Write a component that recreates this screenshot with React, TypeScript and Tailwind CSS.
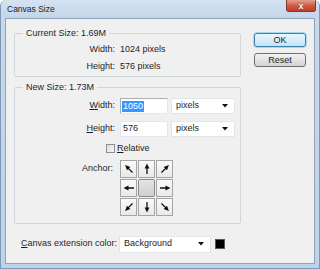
import React from 'react';

const Arrow: React.FC<{ deg: number }> = ({ deg }) => (
  <svg width="12" height="12" viewBox="0 0 12 12">
    <g transform={`rotate(${deg} 6 6)`}>
      <line x1="6" y1="11" x2="6" y2="4" stroke="#111" strokeWidth="1.3" />
      <polygon points="6,0.5 3.6,5.5 8.4,5.5" fill="#111" />
    </g>
  </svg>
);

const Caret: React.FC = () => (
  <svg width="6" height="4" viewBox="0 0 6 4">
    <polygon points="0,0 6,0 3,3.5" fill="#111" />
  </svg>
);

const Select: React.FC<{ value: string; className: string }> = ({ value, className }) => (
  <div className={`flex items-center justify-between bg-white border border-[#e2e6ea] pl-[4px] pr-[6px] ${className}`}>
    <span>{value}</span>
    <Caret />
  </div>
);

const anchorCells = [315, 0, 45, 270, -1, 90, 225, 180, 135];

const App: React.FC = () => {
  return (
    <div className="w-[320px] h-[269px] bg-gradient-to-b from-[#c9d9ec] to-[#bfd2e8] border-l border-r border-b border-[#7f98b5] rounded-t-[6px] flex flex-col font-['Liberation_Sans',Arial,sans-serif] text-[9px] text-[#1e1e1e] overflow-hidden">
      {/* Title bar */}
      <div className="h-[18px] flex items-start justify-between pl-[6px] pr-[3px] bg-gradient-to-b from-[#d5e2f1] to-[#c4d6ea]">
        <span className="pt-[4px] leading-[11px] text-[8.5px] text-[#222]">Canvas Size</span>
        <div className="w-[30px] h-[12px] rounded-b-[3px] border border-t-0 border-[#7a3a30] bg-gradient-to-b from-[#e2a08f] via-[#cf5a44] to-[#c0402a] flex items-center justify-center">
          <span className="text-white font-bold text-[9px] leading-[10px] [text-shadow:0_0_1px_#5a1d12]">x</span>
        </div>
      </div>

      {/* Client area */}
      <div className="mx-[4px] h-[246px] border border-[#8ea2bb] bg-[#f0f0f0] flex flex-col pt-[8px]">
        <div className="flex items-start">
          <div className="ml-[8px] w-[227px] flex flex-col">
            <fieldset className="border border-[#d0d6dc] rounded-[2px] pb-[4px]">
              <legend className="ml-[8px] px-[3px] leading-[12px]">Current Size: 1.69M</legend>
              <div className="grid grid-cols-[100px_1fr] gap-x-[5px] gap-y-[5px] mt-[4px] leading-[12px]">
                <span className="text-right">Width:</span>
                <span>1024 pixels</span>
                <span className="text-right">Height:</span>
                <span>576 pixels</span>
              </div>
            </fieldset>

            <fieldset className="mt-[4px] border border-[#d0d6dc] rounded-[2px] pb-[7px]">
              <legend className="ml-[8px] px-[3px] leading-[12px]">New Size: 1.73M</legend>
              <div className="mt-[5px] flex items-center">
                <span className="w-[100px] text-right">
                  <span className="underline">W</span>idth:
                </span>
                <div className="ml-[5px] w-[48px] h-[16px] bg-white border border-[#abadb3] border-b-[#e3e9ef] border-r-[#e3e9ef] flex items-center pl-[1px]">
                  <span className="bg-[#3399ff] text-white px-[1px] leading-[11px]">1050</span>
                </div>
                <Select value="pixels" className="ml-[3px] w-[64px] h-[16px]" />
              </div>
              <div className="mt-[7px] flex items-center">
                <span className="w-[100px] text-right">
                  <span className="underline">H</span>eight:
                </span>
                <div className="ml-[5px] w-[48px] h-[16px] bg-white border border-[#e3e9ef] flex items-center pl-[2px]">
                  576
                </div>
                <Select value="pixels" className="ml-[3px] w-[64px] h-[16px]" />
              </div>
              <div className="mt-[5px] flex items-center pl-[91px]">
                <div className="w-[9px] h-[9px] border border-[#8f8f8f] bg-gradient-to-br from-[#dcdcdc] to-[#f8f8f8]" />
                <span className="ml-[2px]">
                  <span className="underline">R</span>elative
                </span>
              </div>
              <div className="mt-[4px] flex items-start">
                <span className="w-[98px] text-right mt-[2px]">Anchor:</span>
                <div className="ml-[7px] grid grid-cols-[17px_17px_17px] gap-px">
                  {anchorCells.map((deg, i) =>
                    deg < 0 ? (
                      <div key={i} className="h-[18px] rounded-[2px] border border-[#8a8a8a] bg-gradient-to-b from-[#e4e4e4] to-[#cfcfcf]" />
                    ) : (
                      <div key={i} className="h-[18px] border border-[#a5a5a5] bg-gradient-to-b from-[#fafafa] to-[#e9e9e9] flex items-center justify-center">
                        <Arrow deg={deg} />
                      </div>
                    )
                  )}
                </div>
              </div>
            </fieldset>
          </div>

          <div className="ml-[13px] mt-[6px] flex flex-col gap-[6px]">
            <button className="w-[52px] h-[14px] rounded-[3px] border border-[#3c7fb1] bg-gradient-to-b from-[#eaf6fd] to-[#c4e5f6] shadow-[0_0_0_1px_#a7d6f1] leading-[12px] text-[#1e1e1e]">
              OK
            </button>
            <button className="w-[52px] h-[14px] rounded-[3px] border border-[#707070] bg-gradient-to-b from-[#f2f2f2] to-[#d4d4d4] leading-[12px] text-[#1e1e1e]">
              Reset
            </button>
          </div>
        </div>

        <div className="mt-[12px] ml-[15px] flex items-center">
          <span>
            <span className="underline">C</span>anvas extension color:
          </span>
          <Select value="Background" className="ml-[2px] w-[92px] h-[17px]" />
          <div className="ml-[4px] w-[10px] h-[10px] bg-black border border-[#555]" />
        </div>
      </div>
    </div>
  );
};

export default App;
